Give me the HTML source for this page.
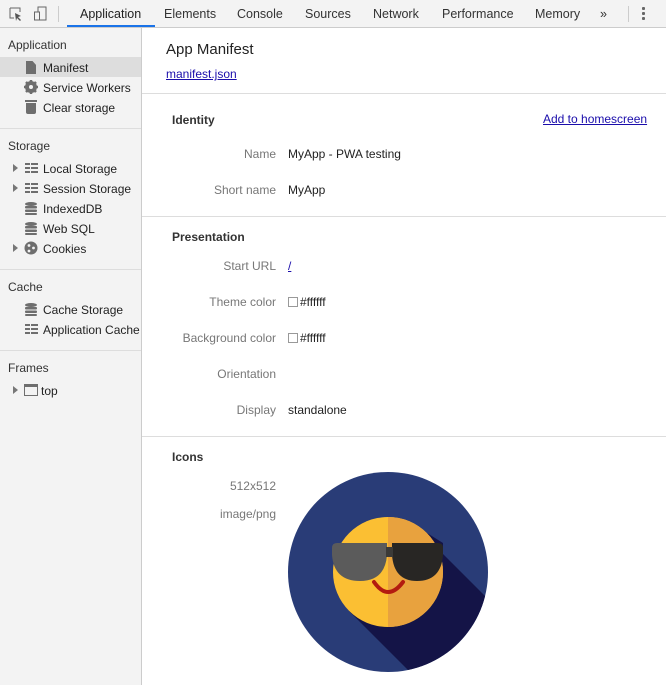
<!DOCTYPE html>
<html><head><style>
*{margin:0;padding:0;box-sizing:border-box}
body{width:666px;height:685px;overflow:hidden;background:#fff;font-family:"Liberation Sans",sans-serif;font-size:12px;color:#222;position:relative}
.a{position:absolute;white-space:nowrap}
#tb{position:absolute;left:0;top:0;width:666px;height:28px;background:#f3f3f3;border-bottom:1px solid #ccc}
#tb .t{position:absolute;top:7px;font-size:12.5px;color:#333}
#sb{position:absolute;left:0;top:28px;width:142px;height:657px;background:#f3f3f3;border-right:1px solid #ccc}
.sh{position:absolute;left:8px;font-size:12px;color:#333}
.si{position:absolute;left:43px;font-size:12px;color:#222}
.sep{position:absolute;left:0;width:141px;height:1px;background:#ddd}
.ic{position:absolute;background:#6e6e6e}
.lab{position:absolute;right:390px;color:#777;font-size:12px;text-align:right}
.val{position:absolute;left:288px;font-size:12px;color:#222}
.hd{position:absolute;left:172px;font-weight:bold;font-size:12px;color:#333}
.hr{position:absolute;left:142px;width:524px;height:1px;background:#ddd}
a{color:#1a0dab;text-decoration:underline}
.sw{display:inline-block;width:10px;height:10px;border:1px solid #999;vertical-align:-1px;margin-right:2px}
.arr{position:absolute;left:13px;width:0;height:0;border-left:5px solid #777;border-top:4px solid transparent;border-bottom:4px solid transparent}
</style></head><body>
<div id="tb">
<svg class="a" style="left:9px;top:7px" width="14" height="14"><path d="M1 1h10v4M1 1v10h4" fill="none" stroke="#666"/><path d="M6 6l6 3-3 1 3 3-1 1-3-3-1 3z" fill="#555"/></svg>
<svg class="a" style="left:33px;top:6px" width="16" height="16"><rect x="5" y="1" width="8" height="13" fill="none" stroke="#666"/><rect x="1.5" y="6" width="5" height="8" fill="#f3f3f3" stroke="#666"/></svg>
<div class="a" style="left:58px;top:6px;width:1px;height:16px;background:#ccc"></div>
<div class="t" style="left:80px;color:#222">Application</div>
<div class="a" style="left:67px;top:25px;width:88px;height:2px;background:#1a73e8"></div>
<div class="t" style="left:164px">Elements</div>
<div class="t" style="left:237px">Console</div>
<div class="t" style="left:305px">Sources</div>
<div class="t" style="left:373px">Network</div>
<div class="t" style="left:442px">Performance</div>
<div class="t" style="left:535px">Memory</div>
<div class="t" style="left:600px">»</div>
<div class="a" style="left:628px;top:6px;width:1px;height:16px;background:#ccc"></div>
<div class="a" style="left:642px;top:7px;width:3px;height:3px;background:#666;box-shadow:0 5px 0 #666,0 10px 0 #666;border-radius:1px"></div>
</div>
<div id="sb">
<div class="sh" style="top:10px">Application</div>
<div class="a" style="left:0;top:29px;width:141px;height:20px;background:#ddd"></div>
<div class="ic" style="left:26px;top:33px;width:10px;height:13px;clip-path:polygon(0 0,65% 0,100% 30%,100% 100%,0 100%)"></div>
<div class="si" style="top:33px">Manifest</div>
<svg class="a" style="left:24px;top:52px" width="14" height="14"><circle cx="7" cy="7" r="4.5" fill="none" stroke="#6e6e6e" stroke-width="3"/><g stroke="#6e6e6e" stroke-width="2.5"><path d="M7 0v14M0 7h14M2 2l10 10M12 2L2 12"/></g><circle cx="7" cy="7" r="2" fill="#f3f3f3"/></svg>
<div class="si" style="top:53px">Service Workers</div>
<div class="ic" style="left:25px;top:72px;width:12px;height:2px"></div>
<div class="ic" style="left:26px;top:75px;width:10px;height:11px;border-radius:0 0 2px 2px"></div>
<div class="si" style="top:73px">Clear storage</div>
<div class="sep" style="top:100px"></div>
<div class="sh" style="top:111px">Storage</div>
<div class="arr" style="top:136px"></div>
<svg class="a" style="left:25px;top:135px" width="13" height="10" fill="#6e6e6e"><rect x="0" y="0" width="5" height="2"/><rect x="6" y="0" width="7" height="2"/><rect x="0" y="4" width="5" height="2"/><rect x="6" y="4" width="7" height="2"/><rect x="0" y="8" width="5" height="2"/><rect x="6" y="8" width="7" height="2"/></svg>
<div class="si" style="top:134px">Local Storage</div>
<div class="arr" style="top:156px"></div>
<svg class="a" style="left:25px;top:155px" width="13" height="10" fill="#6e6e6e"><rect x="0" y="0" width="5" height="2"/><rect x="6" y="0" width="7" height="2"/><rect x="0" y="4" width="5" height="2"/><rect x="6" y="4" width="7" height="2"/><rect x="0" y="8" width="5" height="2"/><rect x="6" y="8" width="7" height="2"/></svg>
<div class="si" style="top:154px">Session Storage</div>
<svg class="a" style="left:25px;top:174px" width="12" height="13" fill="#6e6e6e"><ellipse cx="6" cy="2" rx="6" ry="2"/><rect x="0" y="4" width="12" height="2.5" rx="1"/><rect x="0" y="7.5" width="12" height="2.5" rx="1"/><rect x="0" y="11" width="12" height="2" rx="1"/></svg>
<div class="si" style="top:174px">IndexedDB</div>
<svg class="a" style="left:25px;top:194px" width="12" height="13" fill="#6e6e6e"><ellipse cx="6" cy="2" rx="6" ry="2"/><rect x="0" y="4" width="12" height="2.5" rx="1"/><rect x="0" y="7.5" width="12" height="2.5" rx="1"/><rect x="0" y="11" width="12" height="2" rx="1"/></svg>
<div class="si" style="top:194px">Web SQL</div>
<div class="arr" style="top:216px"></div>
<svg class="a" style="left:24px;top:213px" width="14" height="14"><circle cx="7" cy="7" r="6.5" fill="#6e6e6e"/><circle cx="5" cy="4.5" r="1.4" fill="#f3f3f3"/><circle cx="9.5" cy="7" r="1.4" fill="#f3f3f3"/><circle cx="5" cy="10" r="1.4" fill="#f3f3f3"/></svg>
<div class="si" style="top:214px">Cookies</div>
<div class="sep" style="top:241px"></div>
<div class="sh" style="top:252px">Cache</div>
<svg class="a" style="left:25px;top:275px" width="12" height="13" fill="#6e6e6e"><ellipse cx="6" cy="2" rx="6" ry="2"/><rect x="0" y="4" width="12" height="2.5" rx="1"/><rect x="0" y="7.5" width="12" height="2.5" rx="1"/><rect x="0" y="11" width="12" height="2" rx="1"/></svg>
<div class="si" style="top:275px">Cache Storage</div>
<svg class="a" style="left:25px;top:296px" width="13" height="10" fill="#6e6e6e"><rect x="0" y="0" width="5" height="2"/><rect x="6" y="0" width="7" height="2"/><rect x="0" y="4" width="5" height="2"/><rect x="6" y="4" width="7" height="2"/><rect x="0" y="8" width="5" height="2"/><rect x="6" y="8" width="7" height="2"/></svg>
<div class="si" style="top:295px">Application Cache</div>
<div class="sep" style="top:322px"></div>
<div class="sh" style="top:333px">Frames</div>
<div class="arr" style="top:358px"></div>
<div class="a" style="left:24px;top:356px;width:14px;height:12px;border:1.5px solid #6e6e6e;border-top-width:3px"></div>
<div class="si" style="left:41px;top:356px">top</div>
</div>

<div class="a" style="left:166px;top:41px;font-size:15px;color:#222">App Manifest</div>
<div class="a" style="left:166px;top:67px"><a>manifest.json</a></div>
<div class="hr" style="top:93px"></div>
<div class="hd" style="top:113px">Identity</div>
<div class="a" style="left:543px;top:112px"><a>Add to homescreen</a></div>
<div class="lab" style="top:147px">Name</div><div class="val" style="top:147px">MyApp - PWA testing</div>
<div class="lab" style="top:183px">Short name</div><div class="val" style="top:183px">MyApp</div>
<div class="hr" style="top:216px"></div>
<div class="hd" style="top:230px">Presentation</div>
<div class="lab" style="top:259px">Start URL</div><div class="val" style="top:259px"><a>/</a></div>
<div class="lab" style="top:295px">Theme color</div><div class="val" style="top:295px"><span class="sw"></span>#ffffff</div>
<div class="lab" style="top:331px">Background color</div><div class="val" style="top:331px"><span class="sw"></span>#ffffff</div>
<div class="lab" style="top:367px">Orientation</div>
<div class="lab" style="top:403px">Display</div><div class="val" style="top:403px">standalone</div>
<div class="hr" style="top:436px"></div>
<div class="hd" style="top:450px">Icons</div>
<div class="lab" style="top:479px">512x512</div>
<div class="lab" style="top:507px">image/png</div>

<svg class="a" style="left:288px;top:472px" width="200" height="200" viewBox="0 0 200 200">
<defs><clipPath id="c"><circle cx="100" cy="100" r="100"/></clipPath></defs>
<circle cx="100" cy="100" r="100" fill="#293c77"/>
<path d="M139 61 L155 71 L155 82 L260 187 L161 239 L61 139 Z" fill="#141447" clip-path="url(#c)"/>
<circle cx="100" cy="100" r="55" fill="#fbbf33"/>
<path d="M100 45 A55 55 0 0 1 100 155 Z" fill="#e8a23e"/>
<path d="M44 76 q0-5 5-5 h50 v12 q-2 26-27 26 q-26 0-28-26z" fill="#5b5b5b"/>
<path d="M155 76 q0-5-5-5 h-46 v12 q2 26 25 26 q24 0 26-26z" fill="#282624"/>
<rect x="98" y="75" width="7" height="10" fill="#3b3a38"/>
<path d="M86 110 q14 20 29 0" fill="none" stroke="#b31b10" stroke-width="4" stroke-linecap="round"/>
</svg>
</body></html>
